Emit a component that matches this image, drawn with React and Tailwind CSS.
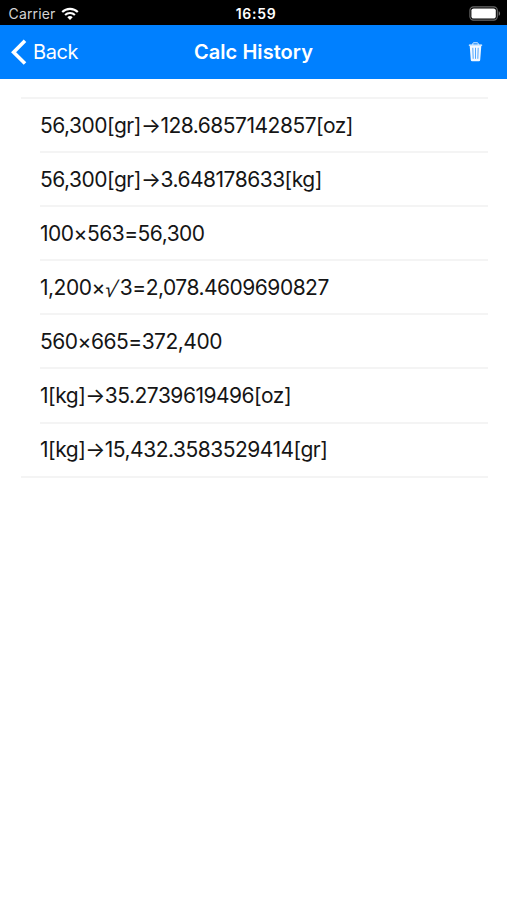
const history = [
    "56,300[gr]→128.6857142857[oz]",
    "56,300[gr]→3.648178633[kg]",
    "100×563=56,300",
    "1,200×√3=2,078.4609690827",
    "560×665=372,400",
    "1[kg]→35.2739619496[oz]",
    "1[kg]→15,432.3583529414[gr]",
];

const WifiIcon = () => (
    <svg width="18" height="14" viewBox="0 0 18 14" fill="none" stroke="#fff" strokeWidth="2.1">
        <path d="M1.2 5.1C5.5 0.8 12.5 0.8 16.8 5.1" />
        <path d="M4.1 8C6.8 5.3 11.2 5.3 13.9 8" />
        <path d="M6.3 10.2C7.8 8.7 10.2 8.7 11.7 10.2L9 12.9Z" fill="#fff" stroke="none" />
    </svg>
);

const BatteryIcon = () => (
    <svg width="32" height="15" viewBox="0 0 32 15" fill="none">
        <rect x="0.9" y="0.9" width="27.4" height="13.2" rx="3.6" stroke="#6b6b6b" strokeWidth="1.1" />
        <rect x="2.4" y="2.4" width="24.4" height="10.2" rx="2.2" fill="#fff" />
        <path d="M29.7 5.2C31.5 5.8 31.5 9.2 29.7 9.8Z" fill="#777" />
    </svg>
);

const TrashIcon = () => (
    <svg width="15" height="20" viewBox="0 0 15 20" fill="none">
        <path d="M4.8 2.8V1.7Q4.8 0.8 5.7 0.8H9.3Q10.2 0.8 10.2 1.7V2.8" stroke="#e6f2ff" strokeWidth="1" />
        <rect x="0.8" y="2.4" width="13.4" height="1.4" rx="0.6" fill="#fff" />
        <path d="M1.7 3.8H13.3L12.2 18Q12.1 19.3 10.8 19.3H4.2Q2.9 19.3 2.8 18Z" fill="#f2f8ff" />
        <path d="M4.8 5.8L5.2 16.8M7.5 5.8V16.8M10.2 5.8L9.8 16.8" stroke="#3d9dff" strokeWidth="0.9" />
    </svg>
);

// The radical needs a taller, slanted glyph than the one in the text font
const Entry = ({ text }) => {
    const [before, after] = text.split("√");
    if (after === undefined) return <span>{text}</span>;
    return (
        <span>
            {before}
            <span className="inline-block w-[15px] leading-none text-[22px] tracking-normal translate-y-[2px] -skew-x-[14deg] font-['Liberation_Sans',sans-serif]">√</span>
            {after}
        </span>
    );
};

const App = () => {
    return (
        <div className="w-full h-[900px] flex flex-col bg-white overflow-hidden font-['Inter',sans-serif]">

            {/* ── Status bar ── */}
            <div className="h-[25px] shrink-0 grid grid-cols-[1fr_auto_1fr] items-center bg-black text-white px-[6px] pt-[2px]">
                <div className="flex items-center gap-[6px] pl-[2.5px]">
                    <span className="text-[14px] leading-4 text-[#d4d4d4] tracking-[0.15px]">Carrier</span>
                    <WifiIcon />
                </div>
                <span className="pl-[5px] text-center text-[14px] leading-4 font-semibold tracking-[0.7px]">16:59</span>
                <div className="flex justify-end">
                    <BatteryIcon />
                </div>
            </div>

            {/* ── Nav bar ── */}
            <div className="h-[54px] shrink-0 grid grid-cols-[1fr_auto_1fr] items-center bg-[#0080ff] text-white px-[11px]">
                <button className="flex items-center gap-[6px]">
                    <svg width="16" height="27" viewBox="0 0 16 27" fill="none" stroke="#fff" strokeWidth="3.6">
                        <path d="M14 1.8L2.6 13.2L14 24.6" />
                    </svg>
                    <span className="text-[20px] leading-6 tracking-[-0.4px]">Back</span>
                </button>
                <h1 className="text-center text-[20px] leading-6 font-semibold tracking-[0.05px] whitespace-nowrap">Calc History</h1>
                <button className="flex justify-end pr-[13px]" aria-label="Clear history">
                    <TrashIcon />
                </button>
            </div>

            {/* ── History list ── */}
            <ul className="mt-[18px] ml-[21px] mr-[19px] border-y-2 border-[#f4f4f4]">
                {history.map((entry, i) => (
                    <li key={i} className="pl-[19px]">
                        <div className={`flex items-center text-[21px] tracking-[-0.5px] text-[#151515] whitespace-nowrap pt-px
                            ${i < history.length - 1 ? "h-[54.1px] border-b-2 border-[#f4f4f4]" : "h-[52px]"}`}>
                            <Entry text={entry} />
                        </div>
                    </li>
                ))}
            </ul>
        </div>
    );
};

export default App;
